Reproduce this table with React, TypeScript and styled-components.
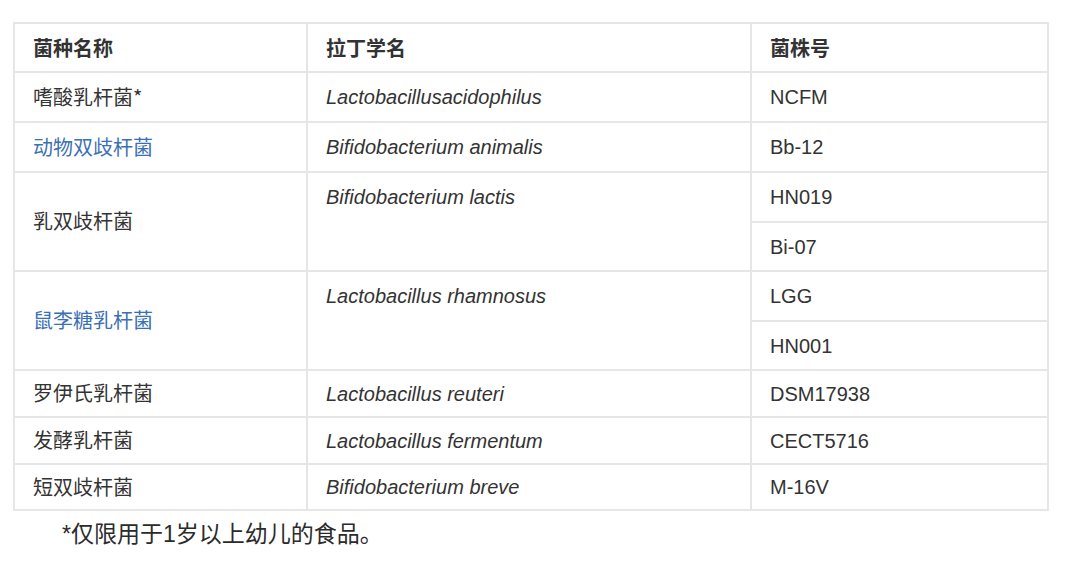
import React from 'react'
import styled, { createGlobalStyle } from 'styled-components'

type Strain = { code: string; h: number }
type Species = { name: string; latin: string; link?: boolean; strains: Strain[] }

const species: Species[] = [
  { name: '嗜酸乳杆菌*', latin: 'Lactobacillusacidophilus', strains: [{ code: 'NCFM', h: 50 }] },
  { name: '动物双歧杆菌', latin: 'Bifidobacterium animalis', link: true, strains: [{ code: 'Bb-12', h: 50 }] },
  {
    name: '乳双歧杆菌',
    latin: 'Bifidobacterium lactis',
    strains: [
      { code: 'HN019', h: 50 },
      { code: 'Bi-07', h: 49 },
    ],
  },
  {
    name: '鼠李糖乳杆菌',
    latin: 'Lactobacillus rhamnosus',
    link: true,
    strains: [
      { code: 'LGG', h: 50 },
      { code: 'HN001', h: 49 },
    ],
  },
  { name: '罗伊氏乳杆菌', latin: 'Lactobacillus reuteri', strains: [{ code: 'DSM17938', h: 47 }] },
  { name: '发酵乳杆菌', latin: 'Lactobacillus fermentum', strains: [{ code: 'CECT5716', h: 47 }] },
  { name: '短双歧杆菌', latin: 'Bifidobacterium breve', strains: [{ code: 'M-16V', h: 46 }] },
]

function App(): JSX.Element {
  return (
    <Page>
      <GlobalStyle />
      <Table>
        <colgroup>
          <col style={{ width: 293 }} />
          <col style={{ width: 444 }} />
          <col style={{ width: 297 }} />
        </colgroup>
        <thead>
          <Row $h={49}>
            <Head>菌种名称</Head>
            <Head>拉丁学名</Head>
            <Head>菌株号</Head>
          </Row>
        </thead>
        <tbody>
          {species.map((s) =>
            s.strains.map((st, i) => (
              <Row key={s.name + st.code} $h={st.h}>
                {i === 0 && (
                  <>
                    <Cell rowSpan={s.strains.length}>
                      <Name $link={s.link}>{s.name}</Name>
                    </Cell>
                    <Latin rowSpan={s.strains.length} $top={s.strains.length > 1}>
                      {s.latin}
                    </Latin>
                  </>
                )}
                <Cell>{st.code}</Cell>
              </Row>
            ))
          )}
        </tbody>
      </Table>
      <Note>*仅限用于1岁以上幼儿的食品。</Note>
    </Page>
  )
}

const GlobalStyle = createGlobalStyle`
body {
  margin: 0;
  background: #ffffff;
  font-family: "Liberation Sans", "Noto Sans CJK SC", sans-serif;
  color: #333333;
}
`
const Page = styled.div`
padding: 22px 0 0 13px;
width: 1080px;
height: 573px;
box-sizing: border-box;
`
const Table = styled.table`
border-collapse: collapse;
table-layout: fixed;
width: 1036px;
font-size: 20px;
line-height: 24px;
`
const Row = styled.tr<{ $h: number }>`
height: ${(p) => p.$h}px;
`
const Head = styled.th`
border: 2px solid #e6e6e6;
padding: 0 18px;
text-align: left;
font-family: "Noto Sans CJK SC", serif;
font-weight: 700;
color: #333333;
`
const Cell = styled.td`
border: 2px solid #e6e6e6;
padding: 0 18px;
vertical-align: middle;
`
const Latin = styled.td<{ $top?: boolean }>`
border: 2px solid #e6e6e6;
padding: ${(p) => (p.$top ? '12px 18px 0' : '0 18px')};
vertical-align: ${(p) => (p.$top ? 'top' : 'middle')};
font-style: italic;
`
const Name = styled.span<{ $link?: boolean }>`
font-family: "Noto Sans CJK SC", sans-serif;
color: ${(p) => (p.$link ? '#3a70b4' : '#333333')};
`
const Note = styled.p`
margin: 10px 0 0 49px;
font-family: "Liberation Sans", "Noto Sans CJK SC", sans-serif;
font-size: 23px;
line-height: 26px;
color: #2b2b2b;
`

export default App
